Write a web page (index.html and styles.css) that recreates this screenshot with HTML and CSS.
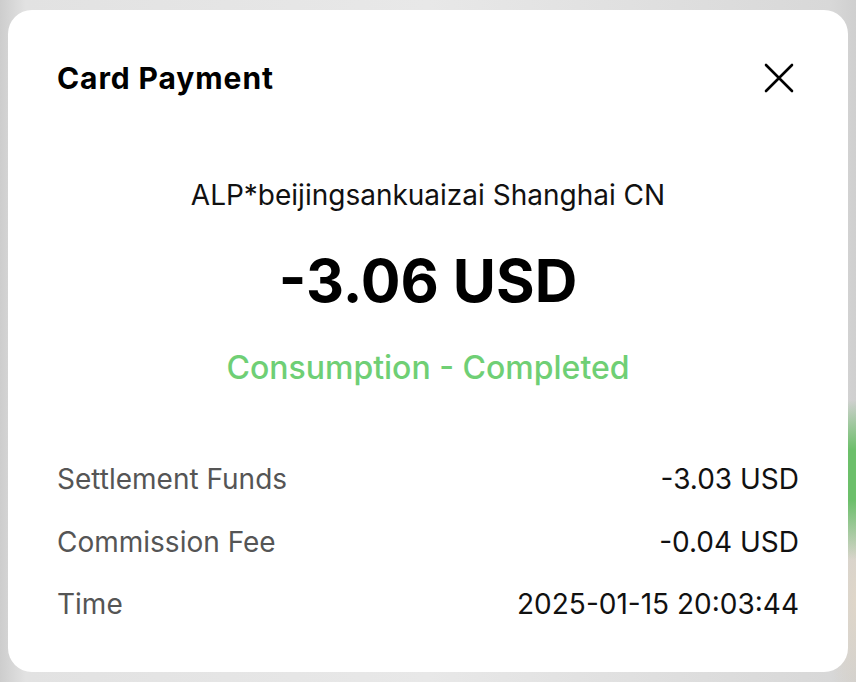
FILE: index.html
```html
<!DOCTYPE html>
<html>
<head>
<meta charset="utf-8">
<link rel="stylesheet" href="styles.css">
</head>
<body>
<div class="backdrop">
  <div class="card">
    <div class="header">
      <h1 class="title">Card Payment</h1>
      <button class="close" aria-label="Close">
        <svg width="30" height="30" viewBox="0 0 30 30"><path d="M2 2 L28 28 M28 2 L2 28" stroke="#000" stroke-width="2.6" stroke-linecap="round" fill="none"/></svg>
      </button>
    </div>
    <div class="merchant">ALP*beijingsankuaizai Shanghai CN</div>
    <div class="amount">-3.06 USD</div>
    <div class="status">Consumption - Completed</div>
    <div class="details">
      <div class="row"><span class="label">Settlement Funds</span><span class="value">-3.03 USD</span></div>
      <div class="row"><span class="label">Commission Fee</span><span class="value">-0.04 USD</span></div>
      <div class="row"><span class="label">Time</span><span class="value">2025-01-15 20:03:44</span></div>
    </div>
  </div>
</div>
</body>
</html>
```
FILE: styles.css
```css
html, body {
  margin: 0;
  padding: 0;
}
body {
  width: 856px;
  height: 682px;
  overflow: hidden;
  font-family: Inter, "Liberation Sans", sans-serif;
}
.backdrop {
  width: 856px;
  height: 682px;
  box-sizing: border-box;
  padding: 10px 8px;
  background:
    linear-gradient(180deg, rgba(108,191,106,0) 400px, #6cbf6a 450px, #6cbf6a 500px, rgba(108,191,106,0) 560px) right top / 9px 100% no-repeat,
    radial-gradient(ellipse 30px 120px at 856px 600px, rgba(225,215,200,0.9) 0%, rgba(225,215,200,0) 100%),
    linear-gradient(90deg, #cdcdcd 0%, #e2e2e2 3%, #e8e8e8 50%, #d8d8d8 97%, #cfcfcf 100%);
}
.card {
  height: 662px;
  box-sizing: border-box;
  background: #fff;
  border-radius: 24px;
  padding: 48px 49px 0 49px;
  display: flex;
  flex-direction: column;
}
.header {
  display: flex;
  justify-content: space-between;
  align-items: center;
  height: 40px;
}
.title {
  margin: 0;
  font-size: 30px;
  font-weight: 700;
  color: #000;
  letter-spacing: 0.9px;
}
.close {
  background: none;
  border: none;
  padding: 0;
  width: 30px;
  height: 30px;
  margin-right: 5px;
  display: flex;
}
.merchant {
  margin-top: 79px;
  text-align: center;
  font-size: 28px;
  line-height: 36px;
  color: #111;
}
.amount {
  margin-top: 30px;
  text-align: center;
  font-size: 59px;
  font-weight: 700;
  line-height: 76px;
  color: #000;
}
.status {
  margin-top: 29px;
  text-align: center;
  font-size: 32px;
  line-height: 40px;
  color: #6fcf75;
  font-weight: 500;
}
.details {
  margin-top: 71px;
  display: flex;
  flex-direction: column;
  gap: 22.5px;
}
.row {
  display: flex;
  justify-content: space-between;
  align-items: center;
  height: 40px;
  font-size: 28px;
}
.label {
  color: #555;
}
.value {
  color: #111;
}
```
